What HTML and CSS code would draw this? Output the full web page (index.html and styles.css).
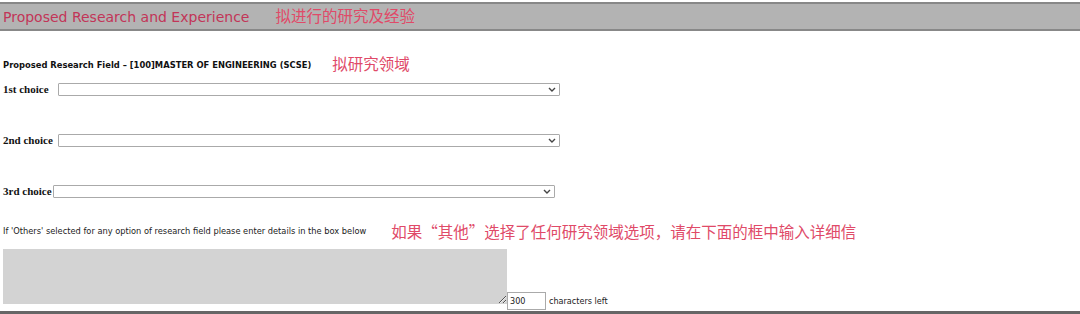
FILE: index.html
```html
<!DOCTYPE html>
<html lang="en">
<head>
  <meta charset="UTF-8" />
  <title>Proposed Research and Experience</title>
  <link rel="stylesheet" href="styles.css">
</head>
<body>
  <div class="page">
    <div class="section-head">
      <span class="section-title">Proposed Research and Experience</span>
      <span class="note note-head">拟进行的研究及经验</span>
    </div>

    <div class="field-title">
      <span class="field-label">Proposed Research Field &ndash; [100]MASTER OF ENGINEERING (SCSE)</span>
      <span class="note note-field">拟研究领域</span>
    </div>

    <div class="choices">
      <div class="choice">
        <label class="choice-label" for="c1">1st choice</label>
        <span class="select-wrap">
          <select id="c1"><option></option></select>
          <svg class="chev" width="8" height="5" viewBox="0 0 8 5"><path d="M1 1l3 3 3-3" fill="none" stroke="#444" stroke-width="1.4"/></svg>
        </span>
      </div>
      <div class="choice">
        <label class="choice-label second" for="c2">2nd choice</label>
        <span class="select-wrap">
          <select id="c2"><option></option></select>
          <svg class="chev" width="8" height="5" viewBox="0 0 8 5"><path d="M1 1l3 3 3-3" fill="none" stroke="#444" stroke-width="1.4"/></svg>
        </span>
      </div>
      <div class="choice">
        <label class="choice-label third" for="c3">3rd choice</label>
        <span class="select-wrap">
          <select id="c3"><option></option></select>
          <svg class="chev" width="8" height="5" viewBox="0 0 8 5"><path d="M1 1l3 3 3-3" fill="none" stroke="#444" stroke-width="1.4"/></svg>
        </span>
      </div>
    </div>

    <div class="others">
      <span class="others-text">If 'Others' selected for any option of research field please enter details in the box below</span>
      <span class="note note-others">如果“其他”选择了任何研究领域选项，请在下面的框中输入详细信</span>
    </div>

    <div class="details">
      <textarea class="details-box"></textarea>
      <input class="counter" type="text" value="300" readonly>
      <span class="counter-text">characters left</span>
    </div>

    <div class="section-end"></div>
  </div>
</body>
</html>
```

FILE: styles.css
```css
body {
  margin: 0;
  background-color: #fff;
  font-family: "DejaVu Sans", Verdana, sans-serif;
  color: #111;
}

.page {
  padding-top: 2px;
}

.note {
  font-family: "Noto Sans CJK SC", sans-serif;
  color: #e04a68;
  font-size: 15.5px;
}

.section-head {
  height: 25px;
  background-color: #b3b3b3;
  border-top: 2px solid #888;
  border-bottom: 2px solid #888;
  display: flex;
  align-items: center;
  padding-left: 3px;
}

.section-title {
  font-size: 14px;
  color: #c23558;
}

.note-head {
  margin-left: 26px;
  margin-top: -4px;
}

.field-title {
  height: 20px;
  margin-top: 23px;
  display: flex;
  align-items: center;
  padding-left: 3px;
}

.field-label {
  font-family: "DejaVu Sans Condensed", "DejaVu Sans", sans-serif;
  font-weight: bold;
  font-size: 9.3px;
}

.note-field {
  margin-left: 21px;
  margin-top: -2px;
}

.choices {
  margin-top: 8px;
  display: flex;
  flex-direction: column;
  gap: 37px;
}

.choice {
  height: 14px;
  display: flex;
  align-items: center;
  padding-left: 3px;
}

.choice-label {
  font-family: "Liberation Serif", serif;
  font-weight: bold;
  font-size: 11px;
  margin-right: 9px;
}

.choice-label.second {
  margin-right: 5px;
}

.choice-label.third {
  margin-right: 1px;
}

.select-wrap {
  position: relative;
  display: inline-block;
}

.select-wrap select {
  appearance: none;
  display: block;
  width: 502px;
  height: 13px;
  padding: 0;
  border: 1px solid #aaa;
  border-radius: 1px;
  background-color: #fff;
}

.chev {
  position: absolute;
  right: 4px;
  top: 4px;
}

.others {
  height: 20px;
  margin-top: 22px;
  display: flex;
  align-items: center;
  padding-left: 3px;
}

.others-text {
  font-family: "DejaVu Sans Condensed", "DejaVu Sans", sans-serif;
  font-size: 9.2px;
  color: #222;
}

.note-others {
  margin-left: 25px;
  margin-top: 2px;
}

.details {
  margin-top: 9px;
  display: flex;
  align-items: flex-end;
  padding-left: 3px;
}

.details-box {
  width: 504px;
  height: 55px;
  margin: 0 0 6px 0;
  padding: 0;
  border: none;
  background-color: #d3d3d3;
  box-sizing: border-box;
}

.counter {
  width: 39px;
  height: 18px;
  box-sizing: border-box;
  border: 1px solid #aaa;
  padding: 0 2px;
  font-family: "DejaVu Sans Condensed", "DejaVu Sans", sans-serif;
  font-size: 9px;
  color: #222;
}

.counter-text {
  font-family: "DejaVu Sans Condensed", "DejaVu Sans", sans-serif;
  font-size: 9px;
  margin-left: 3px;
  margin-bottom: 4px;
  color: #222;
}

.section-end {
  margin-top: 1px;
  border-top: 3px solid #666;
}
```
